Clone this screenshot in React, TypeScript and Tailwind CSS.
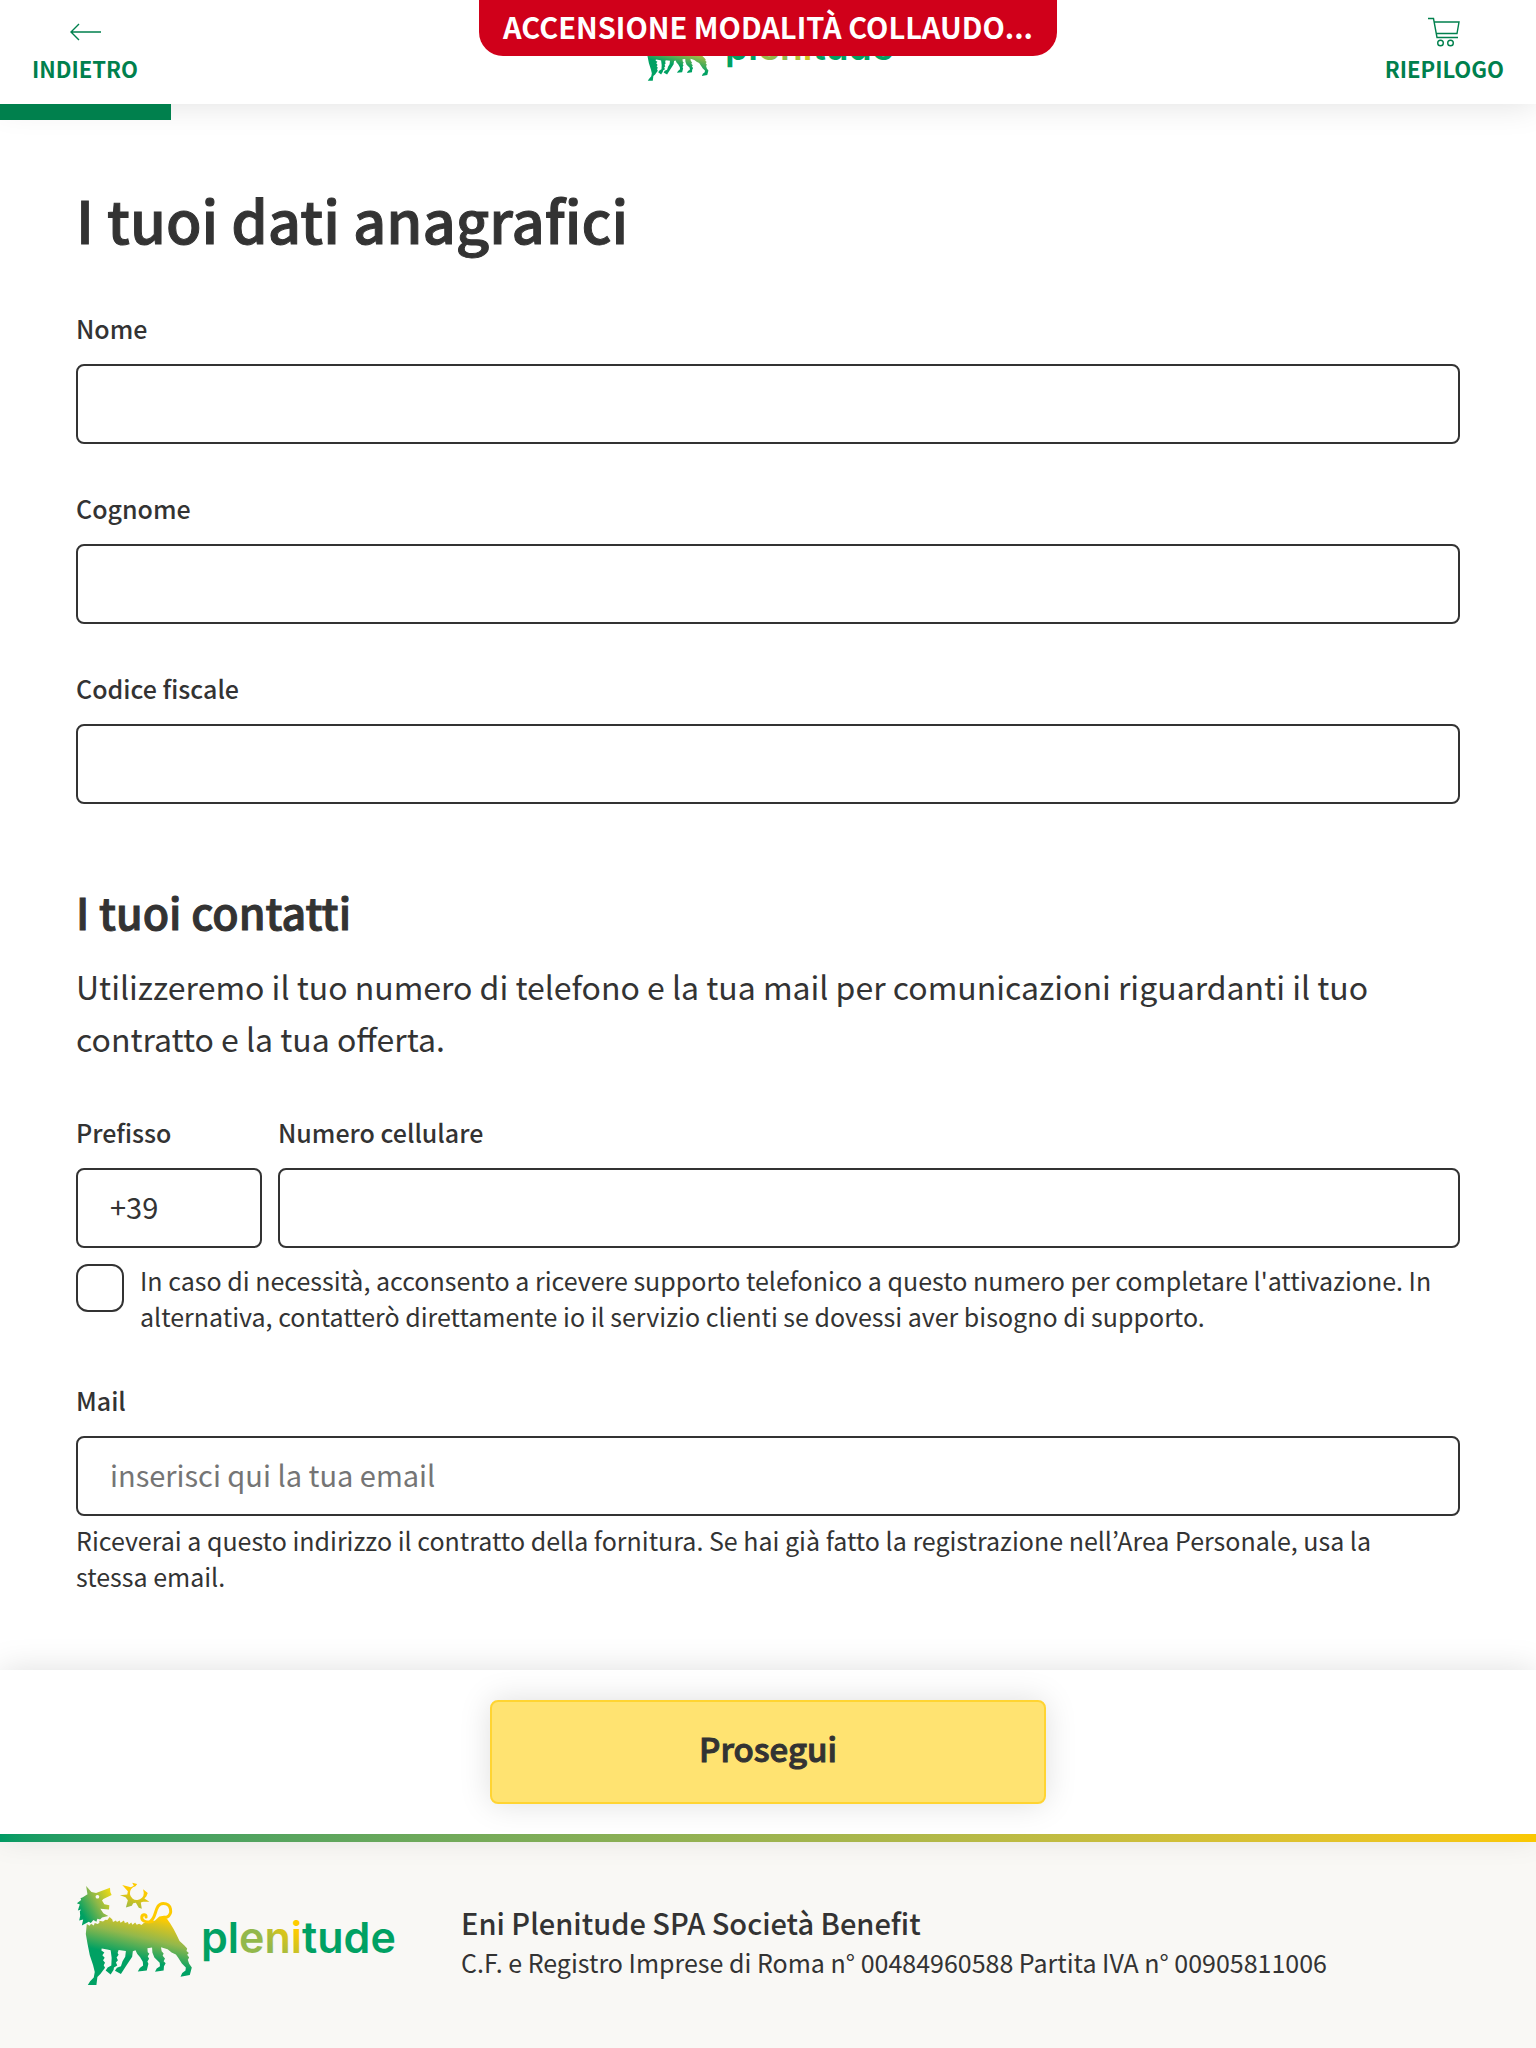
import { useId, type InputHTMLAttributes } from 'react';

function Lion({ className }: { className: string }) {
  const id = useId();
  const body = `${id}-body`;
  const head = `${id}-head`;
  return (
    <svg viewBox="34 34 352 314" className={className} aria-hidden="true">
      <defs>
        <linearGradient id={body} gradientUnits="userSpaceOnUse" x1="300" y1="148" x2="270" y2="278">
          <stop offset="0" stopColor="#fdcb00" />
          <stop offset="0.15" stopColor="#d9c41f" />
          <stop offset="0.5" stopColor="#93b84b" />
          <stop offset="1" stopColor="#00a163" />
        </linearGradient>
        <linearGradient id={head} gradientUnits="userSpaceOnUse" x1="46" y1="120" x2="142" y2="62">
          <stop offset="0" stopColor="#00a163" />
          <stop offset="0.5" stopColor="#8fb848" />
          <stop offset="1" stopColor="#f3dc12" />
        </linearGradient>
        <linearGradient id={`${id}-sun`} gradientUnits="userSpaceOnUse" x1="222" y1="66" x2="204" y2="122">
          <stop offset="0" stopColor="#fdcb00" />
          <stop offset="1" stopColor="#93b84b" />
        </linearGradient>
      </defs>
      <path
        fill={`url(#${head})`}
        fillRule="evenodd"
        d="M64 46 80 64 94 67 136 51 137 64 141 73 116 85 112 90 119 101 134 104 133 117 107 115 116 128 131 137 112 141 106 147 98 145 95 154 86 149 78 158 72 154 51 165 55 147 43 150 46 136 45 122 49 117 39 120 43 107 45 102 36 98 49 88 47 83 54 80 68 71ZM98 73a5.5 5.5 0 1 0 .1 0Z"
      />
      <path
        fill={`url(#${id}-sun)`}
        d="M203 36 218 40 213 47A21 21 0 1 0 238 67L236 56 250 67 246 77 240 84 255 94 236 94 229 96 232 115 223 112 214 97 206 98 202 106 184 111 190 89 183 80 166 74 188 72 190 62 173 43 199 50 208 45Z"
      />
      <path
        fill={`url(#${body})`}
        d="M66 161 74 166 79 160 87 165 90 158 99 161 104 157 104 151 115 153 122 148 128 149 135 140 143 147 145 155 154 150 157 155 165 150 168 157 178 150 181 158 190 155 193 162 200 156 204 163 212 156 217 163 224 160 231 164 238 158 254 158 272 150 285 138 300 136 308 145 318 159 328 176 337 193 346 212 360 225 369 235 367 242 374 248 369 254 375 262 371 269 375 281 383 292 377 315 349 320 354 309 364 301 365 292 353 280 342 263 335 253 322 247 310 237 290 231 292 243 298 250 295 257 302 265 298 273 304 279 299 288 298 301 272 305 277 295 287 288 286 278 270 262 264 247 263 232 249 234 250 246 255 251 250 258 254 266 249 274 252 281 247 301 220 304 226 294 236 286 235 275 227 261 218 251 213 240 205 243 203 260 183 290 169 312 151 302 157 293 169 288 174 273 182 260 184 242 162 239 159 248 162 254 156 262 160 270 154 277 158 286 148 292 147 299 138 313 123 301 129 292 140 286 141 263 138 240 128 238 111 235 110 241 119 247 113 255 120 263 115 270 121 278 117 285 121 293 107 312 98 321 95 345 69 345 76 334 87 322 90 306 85 285 75 255 68 220 63 191Z"
      />
      <g fill="none" strokeLinecap="round" stroke="#fdcb00" strokeWidth="9">
        <path d="M259 151C277 143 270 99 297 99C322 99 326 130 308 140L296 141" />
        <path d="M264 153C251 157 233 154 232 143C231 131 246 129 245 140" />
      </g>
    </svg>
  );
}

function Wordmark({ className }: { className: string }) {
  const id = useId();
  return (
    <svg viewBox="0 0 196 52" className={className} role="img" aria-label="plenitude">
      <defs>
        <linearGradient id={id} gradientUnits="userSpaceOnUse" x1="66" y1="32" x2="88" y2="12">
          <stop offset="0" stopColor="#93b84b" />
          <stop offset="1" stopColor="#fdcb00" />
        </linearGradient>
      </defs>
      <text x="0" y="42" fontFamily="Inter, sans-serif" fontSize="43" fontWeight="600" fill="#00a163">
        pl<tspan fill={`url(#${id})`}>eni</tspan>tude
      </text>
    </svg>
  );
}

const navButtonClass = 'flex flex-col items-center gap-1 text-[22px] leading-8 font-bold text-[#00804d]';

function Field({ id, label, className, ...rest }: { id: string; label: string } & InputHTMLAttributes<HTMLInputElement>) {
  return (
    <div className={className}>
      <label htmlFor={id} className="mb-5 block text-[25px] leading-8 font-medium">
        {label}
      </label>
      <input
        id={id}
        className="block h-20 w-full rounded-lg border-2 border-[#333] bg-white px-8 pb-1 text-[29px] text-[#333] outline-none placeholder:text-[#757575] focus:border-[#00804d]"
        {...rest}
      />
    </div>
  );
}

export default function App() {
  return (
    <div
      lang="it"
      className="flex min-h-screen flex-col bg-white font-['Noto_Sans_CJK_KR','Noto_Sans',sans-serif] text-[#333]"
    >
      <header className="relative z-10 h-26 bg-white shadow-[0_0_32px_rgba(0,0,0,0.13)]">
        <div className="grid h-full grid-cols-[1fr_auto_1fr] items-start px-8 pt-4">
          <button type="button" className={`${navButtonClass} justify-self-start`}>
            <svg viewBox="0 0 32 32" className="size-8" fill="none" stroke="currentColor" strokeWidth="1.4" aria-hidden="true">
              <path d="M32 16H2M10 8 2 16l8 8" />
            </svg>
            INDIETRO
          </button>
          <div className="flex items-start gap-4 pt-1">
            <Lion className="h-[62px] w-[68px]" />
            <Wordmark className="mt-1 w-[170px]" />
          </div>
          <button type="button" className={`${navButtonClass} justify-self-end`}>
            <svg viewBox="0 0 32 32" className="size-8" fill="none" stroke="currentColor" strokeWidth="1.4" aria-hidden="true">
              <path d="M0 2.500h5.500L9 21.500h21M6.500 6H31l-2 11.500H8.500" />
              <circle cx="12.500" cy="27" r="2.800" />
              <circle cx="22.500" cy="27" r="2.800" />
            </svg>
            RIEPILOGO
          </button>
        </div>
        <div className="h-4 w-1/9 bg-[#00804d]" role="progressbar" aria-valuenow={11} aria-label="Avanzamento" />
        <div className="absolute top-0 left-1/2 -translate-x-1/2 rounded-b-3xl bg-[#d0001a] px-6 pt-2 pb-3 text-[29px] leading-9 font-bold whitespace-nowrap text-white">
          ACCENSIONE MODALITÀ COLLAUDO...
        </div>
      </header>

      <main className="px-19 pt-[75px]">
        <h1 className="mb-[53px] text-[58px] leading-20 font-medium [-webkit-text-stroke:1px_#333]">
          I tuoi dati anagrafici
        </h1>
        <div className="flex flex-col gap-12">
          <Field id="nome" label="Nome" type="text" />
          <Field id="cognome" label="Cognome" type="text" />
          <Field id="cf" label="Codice fiscale" type="text" />
        </div>

        <h2 className="mt-[77px] text-[43px] leading-15 font-medium [-webkit-text-stroke:1px_#333]">I tuoi contatti</h2>
        <p className="mt-[19px] text-[32px] leading-[52px]">
          Utilizzeremo il tuo numero di telefono e la tua mail per comunicazioni riguardanti il tuo contratto e la tua
          offerta.
        </p>
        <div className="mt-13 flex gap-4">
          <Field id="prefisso" label="Prefisso" type="text" defaultValue="+39" className="w-[186px]" />
          <Field id="cellulare" label="Numero cellulare" type="tel" className="flex-1" />
        </div>
        <div className="mt-3.5 flex gap-4">
          <input
            id="consenso"
            type="checkbox"
            className="mt-0.5 size-12 shrink-0 appearance-none rounded-xl border-2 border-[#333] bg-white checked:bg-[#00804d]"
          />
          <label htmlFor="consenso" className="text-[25px] leading-9">
            In caso di necessità, acconsento a ricevere supporto telefonico a questo numero per completare l'attivazione.
            In alternativa, contatterò direttamente io il servizio clienti se dovessi aver bisogno di supporto.
          </label>
        </div>
        <Field
          id="mail"
          label="Mail"
          type="email"
          placeholder="inserisci qui la tua email"
          aria-describedby="mail-note"
          className="mt-12.5"
        />
        <p id="mail-note" className="mt-1.5 pr-8 text-[25px] leading-9">
          Riceverai a questo indirizzo il contratto della fornitura. Se hai già fatto la registrazione nell’Area
          Personale, usa la stessa email.
        </p>
      </main>

      <div className="relative z-10 mt-auto flex justify-center bg-white py-[30px] shadow-[0_0_32px_rgba(0,0,0,0.13)]">
        <button
          type="button"
          className="h-26 w-[556px] rounded-lg border-2 border-[#ffd432] bg-[#ffe371] pb-1.5 text-[33px] font-medium shadow-[0_0_32px_rgba(0,0,0,0.13)] [-webkit-text-stroke:1px_#333]"
        >
          Prosegui
        </button>
      </div>
      <footer className="bg-[#f9f8f5]">
        <div className="relative z-20 h-2 bg-linear-to-r from-[#009b64] to-[#fac800]" />
        <div className="flex px-19 pt-10 pb-[62px]">
          <div className="flex w-[385px] gap-2">
            <Lion className="h-[104px] w-[117px]" />
            <Wordmark className="mt-[29px] h-13 w-[196px]" />
          </div>
          <div className="pt-5 leading-10">
            <p className="text-[29px] font-medium">Eni Plenitude SPA Società Benefit</p>
            <p className="text-[25px]">C.F. e Registro Imprese di Roma n° 00484960588 Partita IVA n° 00905811006</p>
          </div>
        </div>
      </footer>
    </div>
  );
}
